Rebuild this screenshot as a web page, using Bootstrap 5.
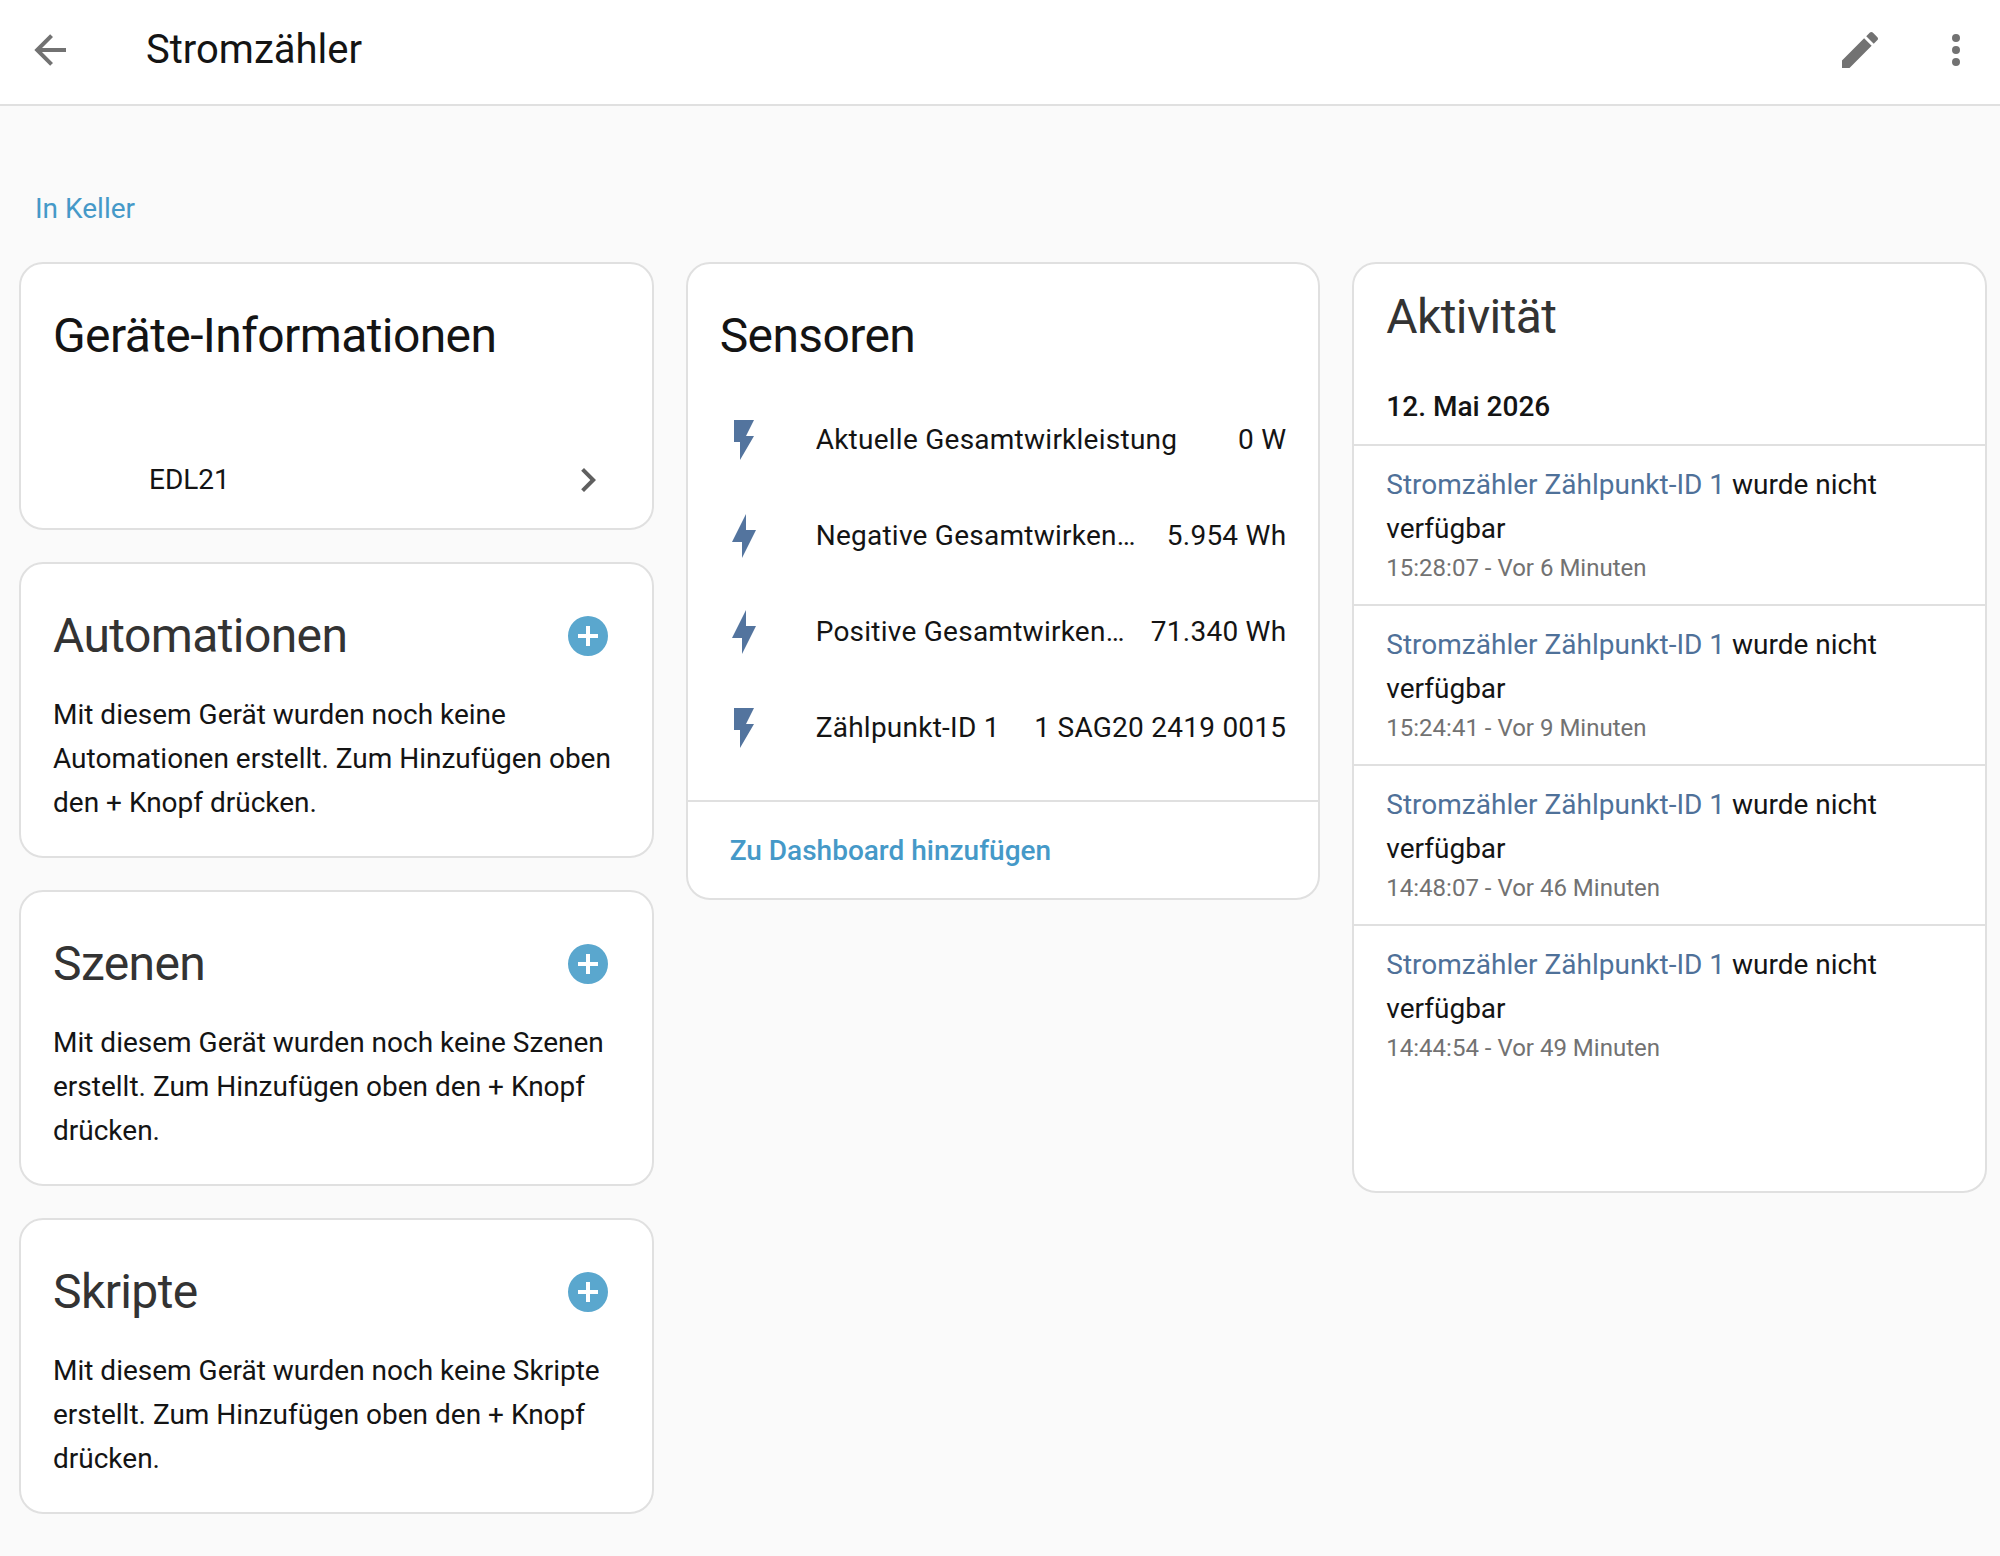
<!DOCTYPE html>
<html lang="de">
<head>
    <meta charset="UTF-8">
    <meta name="viewport" content="width=device-width, initial-scale=1.0">
    <title>Stromzähler</title>
    <link href="https://cdn.jsdelivr.net/npm/bootstrap@5.3.0/dist/css/bootstrap.min.css" rel="stylesheet">
    <style>
        body {
            background-color: #fafafa;
            font-family: Roboto, "Liberation Sans", sans-serif;
            font-size: 28px;
            line-height: 44px;
            color: #141414;
        }
        .top-bar {
            height: 106px;
            background-color: #fff;
            border-bottom: 2px solid #e0e0e0;
            padding: 0 20px 4px 26px;
        }
        .top-title {
            font-size: 40px;
            font-weight: 400;
            margin: 0 0 0 72px;
            color: #141414;
        }
        .bar-icon { width: 48px; height: 48px; fill: #727272; }
        .edit-icon { margin-right: 48px; }
        .area-link {
            display: block;
            margin: 80px 0 30px 35px;
            line-height: 46px;
            color: #4599c8;
            text-decoration: none;
        }
        .columns {
            display: grid;
            grid-template-columns: repeat(3, minmax(0, 1fr));
            gap: 32px;
            padding: 0 13px 0 19px;
            align-items: start;
        }
        .left-stack { gap: 32px; }
        .ha-card {
            background-color: #fff;
            border: 2px solid #e0e0e0;
            border-radius: 24px;
        }
        .card-title-text {
            font-size: 48px;
            line-height: 64px;
            font-weight: 400;
            letter-spacing: -0.6px;
            margin: 0;
        }
        .muted-title { color: #333; }
        .info-card { height: 268px; padding: 40px 32px 0; }
        .info-row { margin-top: 88px; padding-left: 96px; }
        .info-row svg { width: 48px; height: 48px; fill: #5f5f5f; margin-right: 8px; }
        .plain-card { height: 296px; padding: 40px 32px 0; }
        .plain-card svg { width: 48px; height: 48px; fill: #5aa7ce; margin-right: 8px; }
        .plain-card p { margin: 25px 0 0; }
        .sensor-card { height: 638px; padding-top: 40px; }
        .sensor-card .card-title-text { padding-left: 32px; }
        .sensor-list { padding: 22px 32px 48px; letter-spacing: 0.25px; }
        .sensor-row { height: 48px; margin-top: 48px; }
        .sensor-row:first-child { margin-top: 26px; }
        .sensor-row svg { width: 48px; height: 48px; fill: #53749e; flex-shrink: 0; margin-right: 48px; }
        .sensor-name { min-width: 0; flex: 1 1 auto; overflow: hidden; white-space: nowrap; text-overflow: ellipsis; }
        .sensor-value { flex-shrink: 0; white-space: nowrap; margin-left: 24px; }
        .card-foot {
            border-top: 2px solid #e0e0e0;
            padding: 27px 42px;
            color: #4599c8;
            font-weight: 500;
        }
        .log-card { height: 931px; padding-top: 21px; }
        .log-card .card-title-text { padding-left: 32px; }
        .log-date { font-weight: 500; padding: 36px 32px 15px; }
        .log-item { border-top: 2px solid #e0e0e0; padding: 17px 32px 13px; height: 160px; }
        .log-link { color: #4f7199; }
        .log-time { font-size: 24px; line-height: 34px; color: #727272; }
    </style>
</head>
<body>
    <nav class="top-bar d-flex align-items-center">
        <svg class="bar-icon" viewBox="0 0 24 24"><path d="M20,11V13H8L13.5,18.5L12.08,19.92L4.16,12L12.08,4.08L13.5,5.5L8,11H20Z"/></svg>
        <h1 class="top-title flex-grow-1">Stromzähler</h1>
        <svg class="bar-icon edit-icon" viewBox="0 0 24 24"><path d="M20.71,7.04C21.1,6.65 21.1,6 20.71,5.63L18.37,3.29C18,2.9 17.35,2.9 16.96,3.29L15.12,5.12L18.87,8.87M3,17.25V21H6.75L17.81,9.93L14.06,6.18L3,17.25Z"/></svg>
        <svg class="bar-icon" viewBox="0 0 24 24"><path d="M12,16A2,2 0 0,1 14,18A2,2 0 0,1 12,20A2,2 0 0,1 10,18A2,2 0 0,1 12,16M12,10A2,2 0 0,1 14,12A2,2 0 0,1 12,14A2,2 0 0,1 10,12A2,2 0 0,1 12,10M12,4A2,2 0 0,1 14,6A2,2 0 0,1 12,8A2,2 0 0,1 10,6A2,2 0 0,1 12,4Z"/></svg>
    </nav>

    <a class="area-link" href="#">In Keller</a>

    <div class="columns">
        <!-- linke Spalte -->
        <div class="left-stack d-flex flex-column">
            <div class="ha-card info-card">
                <h2 class="card-title-text">Geräte-Informationen</h2>
                <div class="info-row d-flex align-items-center justify-content-between">
                    <span>EDL21</span>
                    <svg viewBox="0 0 24 24"><path d="M8.59,16.58L13.17,12L8.59,7.41L10,6L16,12L10,18L8.59,16.58Z"/></svg>
                </div>
            </div>
            <div class="ha-card plain-card">
                <div class="d-flex align-items-center justify-content-between">
                    <h2 class="card-title-text muted-title">Automationen</h2>
                    <svg viewBox="0 0 24 24"><path d="M17,13H13V17H11V13H7V11H11V7H13V11H17M12,2A10,10 0 0,0 2,12A10,10 0 0,0 12,22A10,10 0 0,0 22,12A10,10 0 0,0 12,2Z"/></svg>
                </div>
                <p>Mit diesem Gerät wurden noch keine Automationen erstellt. Zum Hinzufügen oben den + Knopf drücken.</p>
            </div>
            <div class="ha-card plain-card">
                <div class="d-flex align-items-center justify-content-between">
                    <h2 class="card-title-text muted-title">Szenen</h2>
                    <svg viewBox="0 0 24 24"><path d="M17,13H13V17H11V13H7V11H11V7H13V11H17M12,2A10,10 0 0,0 2,12A10,10 0 0,0 12,22A10,10 0 0,0 22,12A10,10 0 0,0 12,2Z"/></svg>
                </div>
                <p>Mit diesem Gerät wurden noch keine Szenen erstellt. Zum Hinzufügen oben den + Knopf drücken.</p>
            </div>
            <div class="ha-card plain-card">
                <div class="d-flex align-items-center justify-content-between">
                    <h2 class="card-title-text muted-title">Skripte</h2>
                    <svg viewBox="0 0 24 24"><path d="M17,13H13V17H11V13H7V11H11V7H13V11H17M12,2A10,10 0 0,0 2,12A10,10 0 0,0 12,22A10,10 0 0,0 22,12A10,10 0 0,0 12,2Z"/></svg>
                </div>
                <p>Mit diesem Gerät wurden noch keine Skripte erstellt. Zum Hinzufügen oben den + Knopf drücken.</p>
            </div>
        </div>

        <!-- mittlere Spalte -->
        <div class="ha-card sensor-card">
            <h2 class="card-title-text">Sensoren</h2>
            <div class="sensor-list">
                <div class="sensor-row d-flex align-items-center">
                    <svg viewBox="0 0 24 24"><path d="M7,2V13H10V22L17,10H13L17,2H7Z"/></svg>
                    <span class="sensor-name">Aktuelle Gesamtwirkleistung</span>
                    <span class="sensor-value">0 W</span>
                </div>
                <div class="sensor-row d-flex align-items-center">
                    <svg viewBox="0 0 24 24"><path d="M11 15H6L13 1V9H18L11 23V15Z"/></svg>
                    <span class="sensor-name">Negative Gesamtwirkenergie</span>
                    <span class="sensor-value">5.954 Wh</span>
                </div>
                <div class="sensor-row d-flex align-items-center">
                    <svg viewBox="0 0 24 24"><path d="M11 15H6L13 1V9H18L11 23V15Z"/></svg>
                    <span class="sensor-name">Positive Gesamtwirkenergie</span>
                    <span class="sensor-value">71.340 Wh</span>
                </div>
                <div class="sensor-row d-flex align-items-center">
                    <svg viewBox="0 0 24 24"><path d="M7,2V13H10V22L17,10H13L17,2H7Z"/></svg>
                    <span class="sensor-name">Zählpunkt-ID 1</span>
                    <span class="sensor-value">1 SAG20 2419 0015</span>
                </div>
            </div>
            <div class="card-foot">Zu Dashboard hinzufügen</div>
        </div>

        <!-- rechte Spalte -->
        <div class="ha-card log-card">
            <h2 class="card-title-text muted-title">Aktivität</h2>
            <div class="log-date">12. Mai 2026</div>
            <div class="log-item">
                <span class="log-link">Stromzähler Zählpunkt-ID 1</span> wurde nicht verfügbar
                <div class="log-time">15:28:07 - Vor 6 Minuten</div>
            </div>
            <div class="log-item">
                <span class="log-link">Stromzähler Zählpunkt-ID 1</span> wurde nicht verfügbar
                <div class="log-time">15:24:41 - Vor 9 Minuten</div>
            </div>
            <div class="log-item">
                <span class="log-link">Stromzähler Zählpunkt-ID 1</span> wurde nicht verfügbar
                <div class="log-time">14:48:07 - Vor 46 Minuten</div>
            </div>
            <div class="log-item">
                <span class="log-link">Stromzähler Zählpunkt-ID 1</span> wurde nicht verfügbar
                <div class="log-time">14:44:54 - Vor 49 Minuten</div>
            </div>
        </div>
    </div>

    <script src="https://cdn.jsdelivr.net/npm/bootstrap@5.3.0/dist/js/bootstrap.bundle.min.js"></script>
</body>
</html>
